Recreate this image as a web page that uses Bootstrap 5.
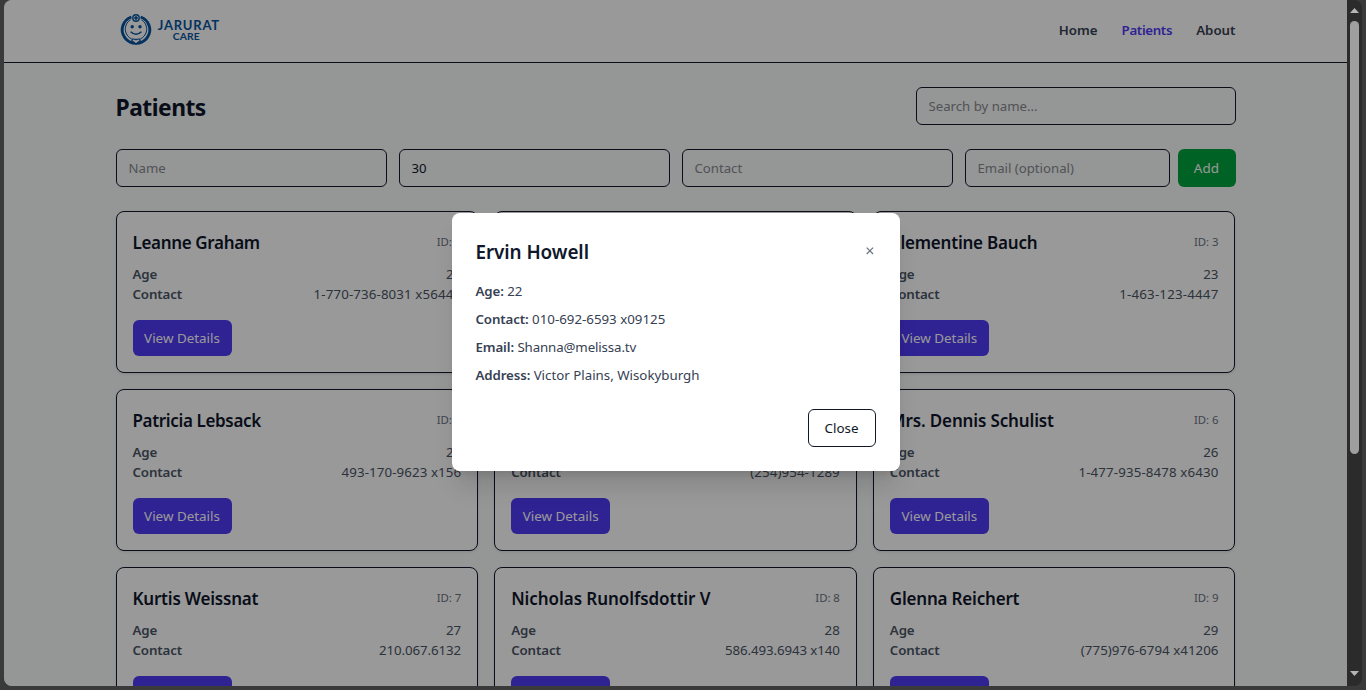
<!DOCTYPE html>
<html lang="en">
<head>
<meta charset="utf-8">
<meta name="viewport" content="width=device-width, initial-scale=1">
<title>Patients</title>
<link href="https://cdn.jsdelivr.net/npm/bootstrap@5.3.0/dist/css/bootstrap.min.css" rel="stylesheet">
<style>
body{font-family:"Noto Sans","Open Sans",sans-serif;font-size:13.3px;line-height:20px;background:#3a3a3a;color:#0f172b;height:690px;overflow:hidden}
.window-frame{height:686px;width:1358px;margin-left:4px;border-radius:8px;background:#2b2b2b}
.page-area{width:1343px}
.site-head{height:63px;border-bottom:1px solid #101828}
.wrap{width:1120px;margin-left:111.5px}
.site-nav{padding-bottom:2px}
.nav-item-link{font-weight:600;color:#364153;text-decoration:none}
.nav-item-link.current{color:#4f39f6;letter-spacing:-.35px}
.page-body{background:#f9fafb}
h1.title{font-size:22.8px;font-weight:700;line-height:32px;letter-spacing:-.5px;padding-top:3px}
.field{height:38px;border:1px solid #101828;border-radius:6px;padding:0 12px;font-size:13.2px;background:transparent;color:#101828;min-width:0}
.field::placeholder{color:#878a8f;opacity:1}
.search-field{width:320px}
.form-grid{display:grid;grid-template-columns:repeat(4,1fr);gap:12px}
.btn-add,.btn-view{color:#fff;border:0;border-radius:6px;font-size:13.4px;padding:0}
.btn-add{width:58px;height:38px;background:#00a63e;letter-spacing:.2px}
.btn-view{width:99px;height:36px;background:#4f39f6}
.card-grid{display:grid;grid-template-columns:repeat(3,1fr);gap:16px}
.patient{height:162px;border:1px solid #101828;border-radius:8px;padding:16px;background:#fff;box-shadow:0 1px 3px rgba(0,0,0,.1)}
.patient h2{font-size:17px;font-weight:600;line-height:26px;padding-top:2px;white-space:nowrap}
.pid{font-size:11.4px;color:#6a7282;letter-spacing:-.05px}
.info{color:#4a5565}
.info b,.details b{font-weight:600;letter-spacing:-.12px}
.scrim{background:rgba(0,0,0,.4);padding-bottom:2px}
.dialog-box{width:448px;height:258px;border-radius:8px;padding:24px;background:#fff;box-shadow:0 20px 25px -5px rgba(0,0,0,.12),0 8px 10px -6px rgba(0,0,0,.12)}
.dialog-box h3{font-size:18.9px;font-weight:600;line-height:26px;padding-top:2px;letter-spacing:-.08px}
.details{color:#364153}
.mail{letter-spacing:-.13px}
.btn-shut{width:68px;height:38px;border:1px solid #101828;border-radius:6px;font-size:13.4px;background:#fff;color:#101828;padding:0}
.scroll-rail{width:15px;padding:8px 0 10px}
.scroll-thumb{width:9px;height:433px;border-radius:5px;background:#9f9f9f;margin-top:8px}
</style>
<script src="https://cdn.jsdelivr.net/npm/bootstrap@5.3.0/dist/js/bootstrap.bundle.min.js"></script>
</head>
<body>
<div class="window-frame d-flex overflow-hidden">
  <div class="page-area position-relative overflow-hidden d-flex flex-column">
    <header class="site-head bg-white flex-shrink-0">
      <div class="wrap d-flex justify-content-between align-items-center h-100">
        <svg width="112" height="40" viewBox="0 0 112 40" fill="none" stroke="#06549f">
          <path d="M15.4 6a13.8 13.5 0 1 0 9.2 0" stroke-width="2.9"/>
          <path d="M14.5 8.8a10.7 10.8 0 1 0 11 0" stroke-width="1"/>
          <circle cx="20" cy="7" r="3.2" stroke-width="1.4"/>
          <path d="M20 5v4M18 7h4" stroke-width="1.5"/>
          <g fill="#06549f" stroke="none"><circle cx="16.2" cy="15.8" r="1.7"/><circle cx="24" cy="15.8" r="1.7"/></g>
          <path d="M14.6 20.8q5.4 5 10.8 0" stroke-width="1.5"/>
          <path d="M20 33l-4.3-3.5q1.6-2.6 4.3-.7 2.7-1.9 4.3.7z" stroke-width="1.1" fill="#fff"/>
          <g fill="#06549f" stroke="none" font-family="Lato, sans-serif" font-weight="700">
            <text x="41.8" y="19" font-size="13" textLength="61.3" lengthAdjust="spacing">JARURAT</text>
            <text x="56.7" y="28.9" font-size="10.3" textLength="27" lengthAdjust="spacing">CARE</text>
          </g>
        </svg>
        <nav class="site-nav d-flex gap-4"><a class="nav-item-link" href="#">Home</a><a class="nav-item-link current" href="#">Patients</a><a class="nav-item-link" href="#">About</a></nav>
      </div>
    </header>
    <main class="page-body flex-grow-1 pt-4">
      <div class="wrap d-flex flex-column gap-4">
        <div class="d-flex justify-content-between align-items-center"><h1 class="title m-0">Patients</h1><input class="field form-control search-field" placeholder="Search by name..."></div>
        <div class="form-grid">
          <input class="field form-control" placeholder="Name">
          <input class="field form-control" value="30">
          <input class="field form-control" placeholder="Contact">
          <div class="d-flex gap-2"><input class="field form-control" placeholder="Email (optional)"><button class="btn btn-add flex-shrink-0">Add</button></div>
        </div>
        <div class="card-grid" id="cards"></div>
      </div>
    </main>
    <div class="scrim position-absolute top-0 start-0 w-100 h-100 d-flex align-items-center justify-content-center">
      <div class="dialog-box d-flex flex-column" role="dialog">
        <div class="d-flex justify-content-between align-items-start mb-3">
          <h3 class="m-0">Ervin Howell</h3>
          <svg class="mt-2" width="12" height="12" viewBox="0 0 12 12" stroke="#6a7282" stroke-width="1.2" aria-label="Close"><path d="M2.7 2.6l6.4 6.4M9.1 2.6L2.7 9"/></svg>
        </div>
        <div class="details d-flex flex-column gap-2">
          <div><b>Age:</b> 22</div>
          <div><b>Contact:</b> 010-692-6593 x09125</div>
          <div><b>Email:</b> <span class="mail">Shanna@melissa.tv</span></div>
          <div><b>Address:</b> Victor Plains, Wisokyburgh</div>
        </div>
        <div class="d-flex justify-content-end mt-auto"><button class="btn btn-shut">Close</button></div>
      </div>
    </div>
  </div>
  <div class="scroll-rail d-flex flex-column align-items-center">
    <svg class="flex-shrink-0" width="9" height="5" viewBox="0 0 9 5" fill="#b5b5b5"><path d="M4.5 0L9 5H0z"/></svg>
    <div class="scroll-thumb flex-shrink-0"></div>
    <svg class="mt-auto flex-shrink-0" width="9" height="5" viewBox="0 0 9 5" fill="#b5b5b5"><path d="M0 0h9L4.5 5z"/></svg>
  </div>
</div>
<script>
// name, age, contact, heading tracking and contact tracking in px
const patients = [
  ["Leanne Graham", 21, "1-770-736-8031 x56442", -.34, .12],
  ["Ervin Howell", 22, "010-692-6593 x09125", -.1, .1],
  ["Clementine Bauch", 23, "1-463-123-4447", -.22, .2],
  ["Patricia Lebsack", 24, "493-170-9623 x156", -.35, .1],
  ["Chelsey Dietrich", 25, "(254)954-1289", -.1, .1],
  ["Mrs. Dennis Schulist", 26, "1-477-935-8478 x6430", -.14, .13],
  ["Kurtis Weissnat", 27, "210.067.6132", -.2, -.08],
  ["Nicholas Runolfsdottir V", 28, "586.493.6943 x140", -.06, -.1],
  ["Glenna Reichert", 29, "(775)976-6794 x41206", -.2, .04]
];
document.getElementById("cards").innerHTML = patients.map(([name, age, contact, track, numTrack], i) => `
  <article class="patient">
    <div class="d-flex justify-content-between align-items-center mb-2"><h2 class="m-0" style="letter-spacing:${track}px">${name}</h2><span class="pid">ID: ${i + 1}</span></div>
    <div class="info">
      <div class="d-flex justify-content-between"><b>Age</b><span>${age}</span></div>
      <div class="d-flex justify-content-between"><b>Contact</b><span style="letter-spacing:${numTrack}px">${contact}</span></div>
    </div>
    <button class="btn btn-view mt-3">View Details</button>
  </article>`).join("");
</script>
</body>
</html>
